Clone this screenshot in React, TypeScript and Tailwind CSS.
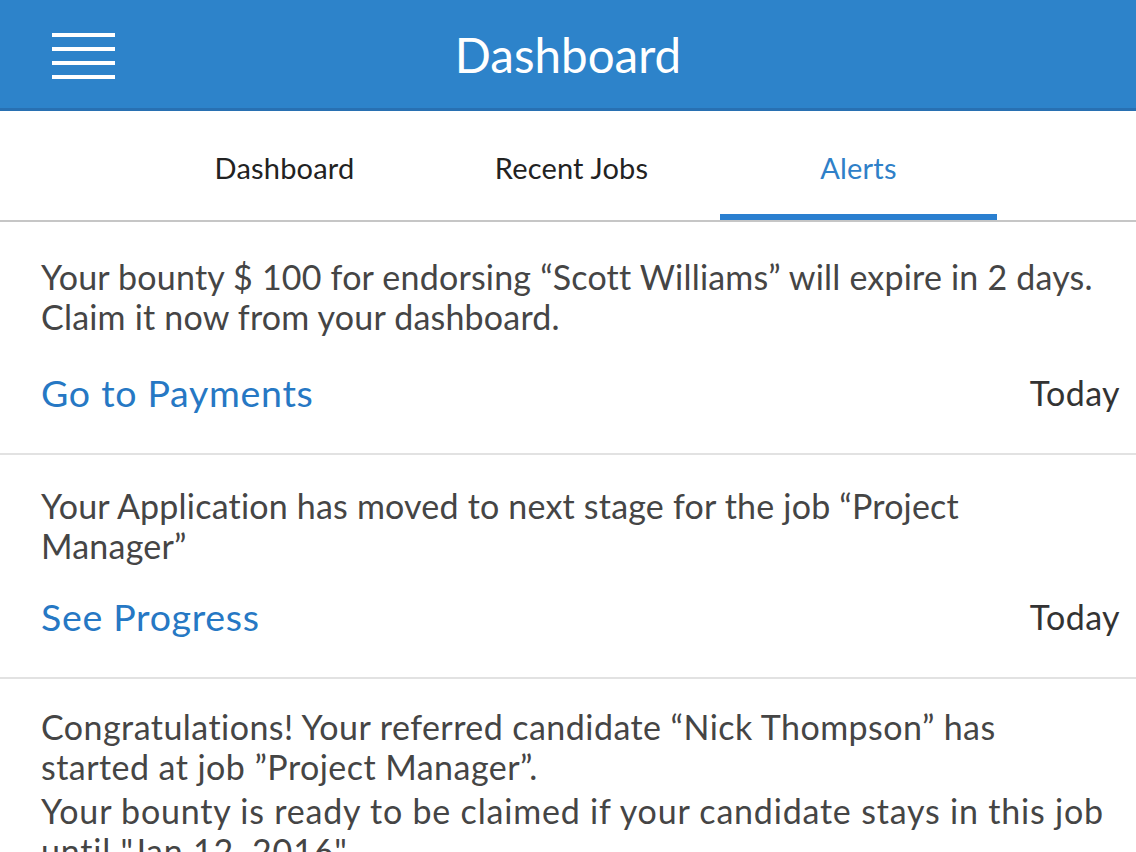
import React from "react";

const font = { fontFamily: "Lato, 'Noto Sans', sans-serif" };

function Hamburger() {
  return (
    <div className="flex flex-col gap-[10px] w-[63px] mt-[3px]">
      <div className="h-[4px] bg-white" />
      <div className="h-[4px] bg-white" />
      <div className="h-[4px] bg-white" />
      <div className="h-[4px] bg-white" />
    </div>
  );
}

function Tab({ label, active }: { label: string; active?: boolean }) {
  return (
    <div className="w-[287px] h-full flex flex-col">
      <div
        className={
          "flex-1 flex items-center justify-center pt-[11px] text-[29px] tracking-[0.2px] " +
          (active ? "text-[#2f80c8]" : "text-[#222222]")
        }
      >
        {label}
      </div>
      <div className={"h-[6px] mx-[5px] " + (active ? "bg-[#2a7fd0]" : "bg-transparent")} />
    </div>
  );
}

function ActionRow({ link }: { link: string }) {
  return (
    <div className="flex items-center justify-between h-[42px]">
      <span className="text-[37.5px] tracking-[0.7px] text-[#2678c4]">{link}</span>
      <span className="text-[34px] tracking-[0.4px] text-[#333333]">Today</span>
    </div>
  );
}

export default function App() {
  return (
    <div className="w-[1136px] h-[852px] overflow-hidden bg-white" style={font}>
      <header className="h-[111px] bg-[#2d83ca] border-b-[3px] border-[#2870b2] grid grid-cols-[1fr_auto_1fr] items-center">
        <div className="pl-[52px] flex items-center">
          <Hamburger />
        </div>
        <div className="text-[47.5px] text-white leading-[1.2]">Dashboard</div>
        <div />
      </header>

      <nav className="h-[111px] border-b-[2px] border-[#c6c6c6] flex pl-[141px]">
        <Tab label="Dashboard" />
        <Tab label="Recent Jobs" />
        <Tab label="Alerts" active />
      </nav>

      <div className="text-[#454545] text-[34px] tracking-[0.2px] leading-[40px]">
        <section className="pt-[35px] pb-[39px] pl-[41px] pr-[16px] border-b-[2px] border-[#e2e2e2]">
          <p>
            Your bounty $ 100 for endorsing “Scott Williams” will expire in 2 days.
            <br />
            Claim it now from your dashboard.
          </p>
          <div className="mt-[35px]">
            <ActionRow link="Go to Payments" />
          </div>
        </section>

        <section className="pt-[31px] pb-[39px] pl-[41px] pr-[16px] border-b-[2px] border-[#e2e2e2]">
          <p>
            Your Application has moved to next stage for the job “Project
            <br />
            Manager”
          </p>
          <div className="mt-[30px]">
            <ActionRow link="See Progress" />
          </div>
        </section>

        <section className="pt-[28px] pb-[39px] pl-[41px] pr-[16px]">
          <p className="tracking-[0.45px]">
            Congratulations! Your referred candidate “Nick Thompson” has
            <br />
            started at job ”Project Manager”.
          </p>
          <p className="mt-[4px] tracking-[0.8px]">
            Your bounty is ready to be claimed if your candidate stays in this job
            <br />
            until "Jan 12, 2016"
          </p>
        </section>
      </div>
    </div>
  );
}
